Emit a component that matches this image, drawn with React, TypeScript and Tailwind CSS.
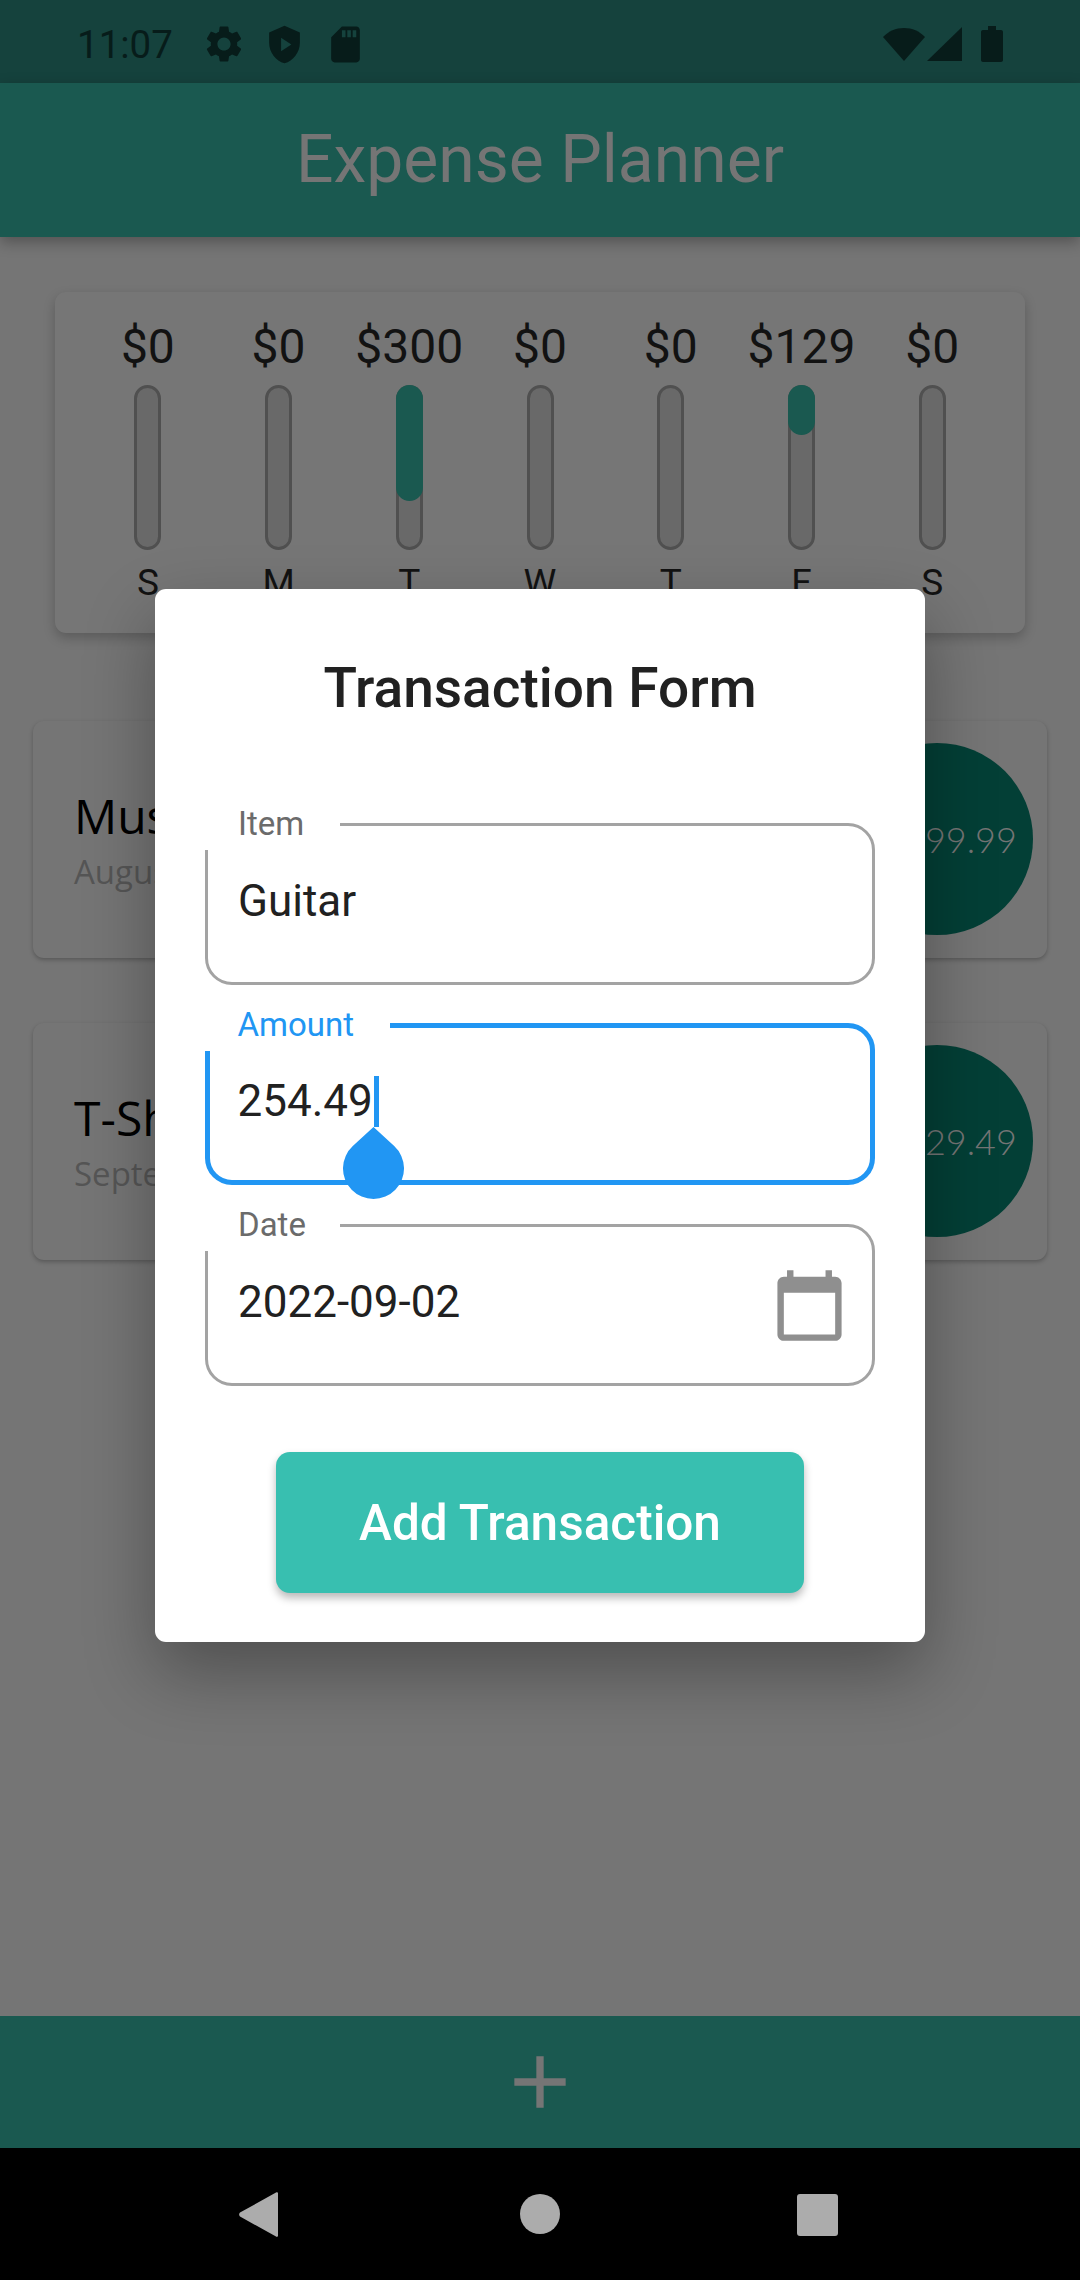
const BARS = [
  { value: "$0", day: "S", fill: 0 },
  { value: "$0", day: "M", fill: 0 },
  { value: "$300", day: "T", fill: 116 },
  { value: "$0", day: "W", fill: 0 },
  { value: "$0", day: "T", fill: 0 },
  { value: "$129", day: "F", fill: 50 },
  { value: "$0", day: "S", fill: 0 },
];

const TRANSACTIONS = [
  { title: "Musical Instrument", date: "August 30, 2022", price: "$299.99" },
  { title: "T-Shirt", date: "September 1, 2022", price: "$129.49" },
];

function StatusBar() {
  return (
    <div className="relative flex h-[83px] shrink-0 items-center bg-[#15423d] pl-[77px] pr-[77px] pt-[5px] text-[#071c1a]">
      <span className="w-[125px] text-[38.5px] leading-[45px]">11:07</span>
      {/* settings */}
      <svg className="h-[44px] w-[44px]" viewBox="0 0 24 24" fill="currentColor">
        <path d="M19.14 12.94c.04-.3.06-.61.06-.94 0-.32-.02-.64-.07-.94l2.03-1.58c.18-.14.23-.41.12-.61l-1.92-3.32c-.12-.22-.37-.29-.59-.22l-2.39.96c-.5-.38-1.03-.7-1.62-.94l-.36-2.54c-.04-.24-.24-.41-.48-.41h-3.84c-.24 0-.43.17-.47.41l-.36 2.54c-.59.24-1.13.57-1.62.94l-2.39-.96c-.22-.08-.47 0-.59.22L2.74 8.87c-.12.21-.08.47.12.61l2.03 1.58c-.05.3-.09.63-.09.94s.02.64.07.94l-2.03 1.58c-.18.14-.23.41-.12.61l1.92 3.32c.12.22.37.29.59.22l2.39-.96c.5.38 1.03.7 1.62.94l.36 2.54c.05.24.24.41.48.41h3.84c.24 0 .44-.17.47-.41l.36-2.54c.59-.24 1.13-.56 1.62-.94l2.39.96c.22.08.47 0 .59-.22l1.92-3.32c.12-.22.07-.47-.12-.61l-2.01-1.58zM12 15.6c-1.98 0-3.6-1.62-3.6-3.6s1.62-3.6 3.6-3.6 3.6 1.62 3.6 3.6-1.62 3.6-3.6 3.6z" />
      </svg>
      {/* play protect shield */}
      <svg className="ml-[18px] h-[41px] w-[41px]" viewBox="0 0 24 24" fill="currentColor">
        <path fillRule="evenodd" d="M12 1L3 5v6c0 5.55 3.84 10.74 9 12 5.16-1.26 9-6.45 9-12V5L12 1zM10 8v8l6-4-6-4z" />
      </svg>
      {/* sd card */}
      <svg className="ml-[19px] h-[43px] w-[43px]" viewBox="0 0 24 24" fill="currentColor">
        <path d="M18 2h-8L4.02 8 4 20c0 1.1.9 2 2 2h12c1.1 0 2-.9 2-2V4c0-1.1-.9-2-2-2zm-6 6h-2V4h2v4zm3 0h-2V4h2v4zm3 0h-2V4h2v4z" />
      </svg>
      <div className="ml-auto flex items-center">
        {/* wifi */}
        <svg className="h-[33px] w-[42px]" viewBox="0 0 42 33" fill="currentColor">
          <path d="M21 33L0 9C5.5 3.2 12.8 0 21 0s15.5 3.2 21 9L21 33z" />
        </svg>
        {/* cell */}
        <svg className="ml-[2px] h-[34px] w-[35px]" viewBox="0 0 35 34" fill="currentColor">
          <path d="M35 0v34H0L35 0z" />
        </svg>
        {/* battery */}
        <svg className="ml-[19px] h-[36px] w-[22px]" viewBox="0 0 22 36" fill="currentColor">
          <path d="M7 0h8v4h5c1.1 0 2 .9 2 2v28c0 1.1-.9 2-2 2H2c-1.1 0-2-.9-2-2V6c0-1.1.9-2 2-2h5V0z" />
        </svg>
      </div>
    </div>
  );
}

function Chart() {
  return (
    <div className="mx-[55px] mt-[55px] flex h-[341px] shrink-0 rounded-[11px] bg-[#767676] px-[27.5px] pt-[27px] shadow-[0_5px_12px_rgba(0,0,0,0.22)]">
      {BARS.map((bar, i) => (
        <div key={i} className="flex flex-1 flex-col items-center text-[#121212]">
          <span className="text-[48px] leading-[56px]">{bar.value}</span>
          <div className="relative mt-[10px] h-[165px] w-[27px] rounded-full border-[3px] border-[#505050] bg-[#696969]">
            {bar.fill > 0 && (
              <div
                className="absolute left-[-3px] top-[-3px] w-[27px] rounded-full bg-[#1a5950]"
                style={{ height: bar.fill }}
              />
            )}
          </div>
          <span className="mt-[12px] text-[37px] leading-[42px]">{bar.day}</span>
        </div>
      ))}
    </div>
  );
}

function TransactionCard({ title, date, price }: { title: string; date: string; price: string }) {
  return (
    <div className="flex h-[237px] items-start justify-between rounded-[11px] bg-[#757575] pl-[41px] pr-[14px] font-['Open_Sans',sans-serif] shadow-[0_2px_4px_rgba(0,0,0,0.25)]">
      <div className="pt-[66px]">
        <div className="text-[48px] leading-[58px] text-black">{title}</div>
        <div className="mt-[5px] text-[33px] leading-[44px] text-[#555555]">{date}</div>
      </div>
      <div className="mt-[22px] flex h-[192px] w-[192px] shrink-0 items-center justify-center rounded-full bg-[#033f36] pl-[26px] font-['Lato',sans-serif] text-[36px] font-light text-[#757575]">
        {price}
      </div>
    </div>
  );
}

function Field({
  label,
  value,
  focused,
  trailing,
}: {
  label: string;
  value: string;
  focused?: boolean;
  trailing?: boolean;
}) {
  return (
    <div
      className={
        focused
          ? "relative h-[162px] rounded-[27px] border-[5.5px] border-[#2196f3]"
          : "relative h-[162px] rounded-[27px] border-[3px] border-[#a3a3a3]"
      }
    >
      {/* floating label: the white box also hides the notch of the outline */}
      <div
        className={
          focused
            ? "absolute left-[-5.5px] top-[-23px] h-[46px] w-[185px] bg-white pl-[33px] text-[33px] leading-[39px] text-[#2196f3]"
            : "absolute left-[-3px] top-[-22px] h-[46px] w-[135px] bg-white pl-[33px] text-[33px] leading-[39px] text-[#6b6b6b]"
        }
      >
        {label}
      </div>
      <div className={focused ? "flex items-start justify-between pl-[27.5px] pr-[24px]" : "flex items-start justify-between pl-[30px] pr-[24px]"}>
        <span className={focused ? "mt-[47px] text-[44px] leading-[52px] text-[#212121]" : "mt-[49px] text-[44px] leading-[52px] text-[#212121]"}>{value}</span>
        {trailing && (
          <svg className="mt-[40px] h-[77px] w-[77px]" viewBox="0 0 24 24" fill="#8f8f8f">
            <path d="M20 3h-1V1h-2v2H7V1H5v2H4c-1.1 0-2 .9-2 2v16c0 1.1.9 2 2 2h16c1.1 0 2-.9 2-2V5c0-1.1-.9-2-2-2zm0 18H4V8h16v13z" />
          </svg>
        )}
      </div>
      {focused && (
        <>
          <div className="absolute left-[164px] top-[48px] h-[51px] w-[5px] bg-[#2196f3]" />
          <svg className="absolute left-[133px] top-[99px] h-[72px] w-[61px]" viewBox="0 0 61 72" fill="#2196f3">
            <path d="M30.5 0L51.2 19.1A30.5 30.5 0 1 1 9.8 19.1Z" />
          </svg>
        </>
      )}
    </div>
  );
}

function TransactionDialog() {
  return (
    <div className="absolute inset-0 flex items-start justify-center pt-[589px]">
      <div className="flex w-[770px] flex-col rounded-[11px] bg-white px-[50px] pb-[49px] pt-[67px] shadow-[0_30px_70px_rgba(0,0,0,0.32)]">
        <h2 className="text-center text-[55px] font-medium leading-[64px] text-[#212121]">Transaction Form</h2>
        <div className="mt-[103px] flex flex-col">
          <Field label="Item" value="Guitar" />
          <div className="mt-[38px]">
            <Field label="Amount" value="254.49" focused />
          </div>
          <div className="mt-[39px]">
            <Field label="Date" value="2022-09-02" trailing />
          </div>
        </div>
        <button className="mt-[66px] h-[141px] w-[528px] self-center rounded-[14px] bg-[#38bfb0] pt-[2px] text-[49.5px] font-medium text-white shadow-[0_5px_8px_rgba(0,0,0,0.28)]">
          Add Transaction
        </button>
      </div>
    </div>
  );
}

export default function App() {
  return (
    <div className="relative flex h-[2280px] w-[1080px] flex-col overflow-hidden bg-[#757575] font-['Roboto',sans-serif]">
      <StatusBar />
      <div className="relative flex h-[154px] shrink-0 items-center justify-center bg-[#1a5950] text-[66px] leading-[78px] text-[#757575] shadow-[0_5px_14px_rgba(0,0,0,0.3)]">
        Expense Planner
      </div>

      <div className="flex flex-1 flex-col">
        <Chart />
        <div className="mx-[33px] mt-[88px] flex flex-col gap-[65px]">
          {TRANSACTIONS.map((t) => (
            <TransactionCard key={t.title} {...t} />
          ))}
        </div>
      </div>

      <div className="flex h-[132px] shrink-0 items-center justify-center bg-[#1a5950]">
        <svg className="h-[88px] w-[88px]" viewBox="0 0 24 24" fill="#757575">
          <path d="M19 13h-6v6h-2v-6H5v-2h6V5h2v6h6v2z" />
        </svg>
      </div>

      {/* android nav buttons */}
      <div className="relative flex h-[132px] shrink-0 items-start bg-black pl-[239px] pt-[44px] text-[#acacac]">
        <svg className="h-[45px] w-[39px]" viewBox="0 0 39 45" fill="currentColor">
          <path d="M37 .6c1-.7 2-.2 2 1v42c0 1.3-1 1.7-2 1L1 24.5c-1.2-1-1.2-3 0-4z" />
        </svg>
        <div className="ml-[242px] mt-[2px] h-[40px] w-[40px] rounded-full bg-[#acacac]" />
        <div className="ml-[237px] mt-[2px] h-[42px] w-[41px] rounded-[3px] bg-[#acacac]" />
      </div>

      <TransactionDialog />
    </div>
  );
}
